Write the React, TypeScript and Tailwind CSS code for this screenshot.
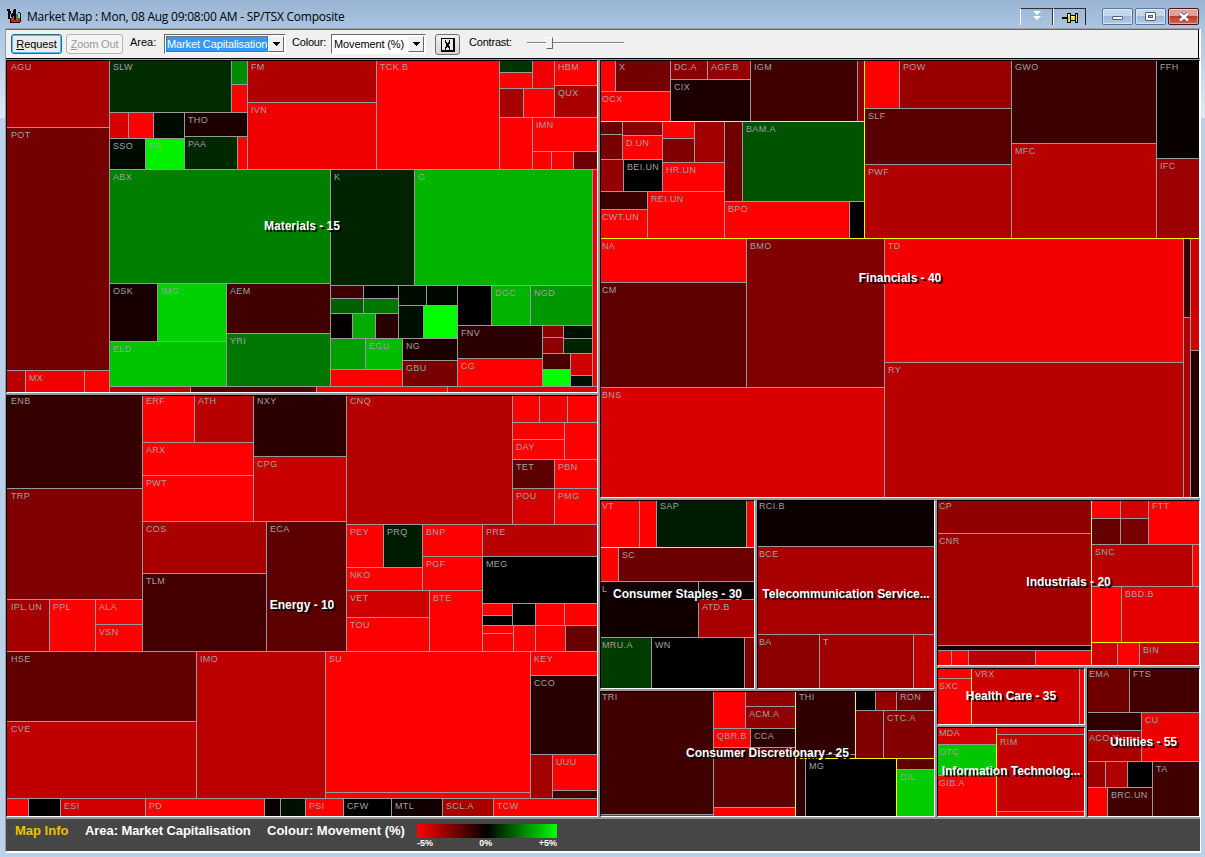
import type { CSSProperties, ReactNode } from 'react'

interface Tile {
  kind: 'tile'
  to: number
  shade: number
  label?: string
}

interface Split {
  kind: 'row' | 'col'
  to: number
  items: Cell[]
  major: boolean
}

type Cell = Tile | Split

interface Box {
  x0: number
  y0: number
  x1: number
  y1: number
}

// `to` is the coordinate of the divider that closes a cell; END fills what is left.
const END = -1

// shade: -255 (full red) .. 0 (black) .. 255 (full green)
const t = (to: number, shade: number, label?: string): Tile => ({ kind: 'tile', to, shade, label })
const row = (to: number, items: Cell[], major = false): Split => ({ kind: 'row', to, items, major })
const col = (to: number, items: Cell[], major = false): Split => ({ kind: 'col', to, items, major })

const MATERIALS = row(END, [
  col(109, [
    t(127, -168, 'AGU'),
    t(370, -116, 'POT'),
    row(END, [t(25, -184), t(84, -240, 'MX'), t(END, -255)]),
  ]),
  col(END, [
    row(169, [
      col(247, [
        row(112, [t(231, 44, 'SLW'), col(END, [t(84, 140), t(END, -255)])]),
        row(END, [
          col(184, [
            row(138, [t(128, -216), t(153, -255), t(END, 12)]),
            row(END, [t(145, 12, 'SSO'), t(END, 240, 'FR')]),
          ]),
          col(END, [t(136, -28, 'THO'), row(END, [t(237, 40, 'PAA'), t(END, -255)])]),
        ]),
      ]),
      col(376, [t(102, -176, 'FM'), t(END, -240, 'IVN')]),
      t(499, -255, 'TCK.B'),
      col(END, [
        row(117, [
          col(554, [
            row(88, [col(532, [t(72, 52), t(END, -255)]), t(END, -240)]),
            row(END, [t(523, -168), t(END, -255)]),
          ]),
          col(END, [t(85, -255, 'HBM'), t(END, -168, 'QUX')]),
        ]),
        row(END, [
          t(532, -255),
          col(END, [
            t(151, -255, 'IMN'),
            row(END, [t(551, -255), t(573, -255), t(END, -108)]),
          ]),
        ]),
      ]),
    ]),
    row(386, [
      col(330, [
        t(283, 128, 'ABX'),
        row(END, [
          col(226, [
            row(341, [t(157, -24, 'OSK'), t(END, 208, 'IMG')]),
            t(END, 196, 'ELD'),
          ]),
          col(END, [t(333, -64, 'AEM'), t(END, 120, 'YRI')]),
        ]),
      ]),
      col(592, [
        row(285, [t(414, 36, 'K'), t(END, 180, 'G')]),
        row(END, [
          col(457, [
            row(338, [
              col(398, [
                row(298, [t(363, -60), t(END, 0)]),
                row(313, [t(363, 96), t(END, 120)]),
                row(END, [t(352, -4), t(375, 172), t(END, -40)]),
              ]),
              col(END, [
                row(305, [t(426, 12), t(END, 8)]),
                row(END, [t(423, 16), t(END, 255)]),
              ]),
            ]),
            row(END, [
              col(402, [
                row(369, [t(365, 160), t(END, 188, 'EGU')]),
                t(END, -255),
              ]),
              col(END, [t(360, -28, 'NG'), t(END, -120, 'GBU')]),
            ]),
          ]),
          col(END, [
            row(325, [t(491, 0), t(530, 180, 'DGC'), t(END, 152, 'NGD')]),
            row(END, [
              col(542, [t(358, -44, 'FNV'), t(END, -255, 'CG')]),
              col(END, [
                row(353, [
                  col(563, [t(337, -140), t(END, -144)]),
                  col(END, [t(338, 16), t(END, 36)]),
                ]),
                row(END, [
                  col(570, [t(369, -72), t(END, 255)]),
                  col(END, [t(375, -208), t(END, 16)]),
                ]),
              ]),
            ]),
          ]),
        ]),
      ]),
      t(END, -240),
    ]),
    row(END, [t(190, -192), t(316, -80), t(447, -255), t(END, -224)]),
  ]),
])

const ENERGY = col(END, [
  row(651, [
    col(142, [
      t(488, -52, 'ENB'),
      t(599, -128, 'TRP'),
      row(END, [
        t(49, -164, 'IPL.UN'),
        t(95, -255, 'PPL'),
        col(END, [t(624, -255, 'ALA'), t(END, -255, 'VSN')]),
      ]),
    ]),
    col(346, [
      row(521, [
        col(253, [
          row(442, [t(194, -255, 'ERF'), t(END, -184, 'ATH')]),
          t(475, -255, 'ARX'),
          t(END, -255, 'PWT'),
        ]),
        col(END, [t(456, -44, 'NXY'), t(END, -200, 'CPG')]),
      ]),
      row(END, [
        col(266, [t(573, -168, 'COS'), t(END, -68, 'TLM')]),
        t(END, -92, 'ECA'),
      ]),
    ]),
    col(END, [
      row(524, [
        t(512, -180, 'CNQ'),
        col(END, [
          row(422, [t(539, -255), t(567, -240), t(END, -255)]),
          row(459, [col(564, [t(439, -255), t(END, -255, 'DAY')]), t(END, -255)]),
          row(488, [t(554, -92, 'TET'), t(END, -255, 'PBN')]),
          row(END, [t(554, -212, 'POU'), t(END, -255, 'PMG')]),
        ]),
      ]),
      row(END, [
        col(482, [
          row(590, [
            col(422, [
              row(567, [t(383, -255, 'PEY'), t(END, 28, 'PRQ')]),
              t(END, -255, 'NKO'),
            ]),
            col(END, [t(556, -255, 'BNP'), t(END, -255, 'PGF')]),
          ]),
          row(END, [
            col(429, [t(617, -208, 'VET'), t(END, -255, 'TOU')]),
            t(END, -255, 'BTE'),
          ]),
        ]),
        col(END, [
          t(556, -184, 'PRE'),
          t(603, 0, 'MEG'),
          row(625, [
            col(512, [t(615, -255), t(END, 0)]),
            t(535, 0),
            t(564, -255),
            t(END, -255),
          ]),
          row(END, [
            col(513, [t(633, -255), t(END, -255)]),
            t(535, -255),
            t(565, -255),
            t(END, -104),
          ]),
        ]),
      ]),
    ]),
  ]),
  row(798, [
    col(196, [t(721, -96, 'HSE'), t(END, -192, 'CVE')]),
    t(325, -188, 'IMO'),
    col(530, [t(792, -255, 'SU'), t(END, -255)]),
    col(END, [
      t(675, -255, 'KEY'),
      t(754, -40, 'CCO'),
      row(END, [
        t(552, -164),
        col(END, [t(790, -255, 'UUU'), t(END, -64)]),
      ]),
    ]),
  ]),
  row(END, [
    t(28, -255),
    t(60, 0),
    t(145, -208, 'ESI'),
    t(264, -255, 'PD'),
    t(280, -12),
    t(305, 16),
    t(343, -255, 'PSI'),
    t(391, 0, 'CFW'),
    t(442, -16, 'MTL'),
    t(493, -168, 'SCL.A'),
    t(END, -255, 'TCW'),
  ]),
])

const FINANCIALS = col(END, [
  row(238, [
    col(864, [
      row(121, [
        col(670, [
          row(91, [t(615, -255), t(END, -116, 'X')]),
          t(END, -255, 'OCX'),
        ]),
        col(750, [
          row(79, [t(707, -140, 'DC.A'), t(END, -148, 'AGF.B')]),
          t(END, -28, 'CIX'),
        ]),
        t(857, -64, 'IGM'),
        t(END, -140),
      ]),
      row(END, [
        col(724, [
          row(191, [
            col(662, [
              row(159, [
                col(622, [t(134, -104), t(END, -120)]),
                col(END, [t(135, -140), t(END, -255, 'D.UN')]),
              ]),
              row(END, [t(623, -148), t(END, 0, 'BEI.UN')]),
            ]),
            col(END, [
              row(162, [
                col(694, [t(138, -255), t(END, -128)]),
                t(END, -160),
              ]),
              t(END, -255, 'HR.UN'),
            ]),
          ]),
          row(END, [
            col(647, [t(209, -60), t(END, -255, 'CWT.UN')]),
            t(END, -255, 'REI.UN'),
          ]),
        ]),
        col(END, [
          row(201, [t(742, -112), t(END, 84, 'BAM.A')]),
          row(END, [t(849, -255, 'BPO'), t(END, 0)]),
        ]),
      ]),
    ], true),
    row(END, [
      col(1011, [
        row(108, [t(899, -255), t(END, -152, 'POW')]),
        t(164, -88, 'SLF'),
        t(END, -176, 'PWF'),
      ]),
      col(1156, [t(143, -60, 'GWO'), t(END, -184, 'MFC')]),
      col(END, [t(158, -10, 'FFH'), t(END, -156, 'IFC')]),
    ]),
  ], true),
  row(END, [
    col(884, [
      row(387, [
        col(746, [t(282, -255, 'NA'), t(END, -92, 'CM')]),
        t(END, -128, 'BMO'),
      ]),
      t(END, -216, 'BNS'),
    ]),
    col(1183, [t(362, -244, 'TD'), t(END, -184, 'RY')]),
    col(1190, [t(317, -56), t(END, -172)]),
    col(END, [t(350, -208), t(END, -40)]),
  ]),
], true)

const STAPLES = col(END, [
  row(547, [t(639, -255, 'VT'), t(656, -255), t(746, 28, 'SAP'), t(END, -255)]),
  col(END, [
    row(581, [t(618, -255), t(END, -108, 'SC')]),
    row(637, [
      t(698, -16, 'L'),
      col(END, [t(599, -12), t(END, -168, 'ATD.B')]),
    ]),
    row(END, [t(651, 60, 'MRU.A'), t(744, 0, 'WN'), t(END, -128)]),
  ]),
], true)

const TELECOM = col(END, [
  t(546, -12, 'RCI.B'),
  t(634, -168, 'BCE'),
  row(END, [t(819, -140, 'BA'), t(913, -160, 'T'), t(END, -192)]),
])

const DISCRETIONARY = row(END, [
  row(795, [
    col(713, [t(814, -64, 'TRI'), t(END, -240)]),
    col(END, [
      row(728, [
        t(745, -255),
        col(END, [t(706, -148), t(END, -144, 'ACM.A')]),
      ]),
      row(747, [t(750, -255, 'QBR.B'), t(END, -44, 'CCA')]),
      t(807, -92),
      t(END, -255),
    ]),
  ]),
  col(END, [
    row(758, [
      col(855, [t(754, -48, 'THI'), t(END, -48)]),
      col(END, [
        row(710, [t(875, 0), t(896, -148), t(END, -104, 'RON')]),
        row(END, [t(883, -128), t(END, -132, 'CTC.A')]),
      ]),
    ], true),
    row(END, [
      row(896, [t(805, -48), t(END, 0, 'MG')]),
      col(END, [t(769, -96), t(END, 204, 'GIL')]),
    ], true),
  ], true),
], true)

const INDUSTRIALS = row(END, [
  col(1091, [
    t(533, -144, 'CP'),
    t(645, -160, 'CNR'),
    t(650, -24),
    row(END, [t(951, -255), t(968, -255), t(1035, -184), t(END, -255)]),
  ]),
  col(END, [
    col(642, [
      row(544, [
        col(1148, [
          row(518, [t(1120, -255), t(END, -212)]),
          row(END, [t(1120, -100), t(END, -120)]),
        ]),
        t(END, -255, 'FTT'),
      ]),
      row(586, [t(1192, -184, 'SNC'), t(END, -255)]),
      row(END, [t(1121, -255), t(END, -228, 'BBD.B')]),
    ]),
    row(END, [t(1117, -212), t(1139, -255), t(END, -196, 'BIN')]),
  ], true),
], true)

const HEALTH = row(END, [
  col(971, [t(678, -255), t(END, -255, 'SXC')]),
  row(END, [t(1079, -204, 'VRX'), t(END, -255)]),
], true)

const TECH = row(END, [
  col(996, [t(744, -212, 'MDA'), t(775, 200, 'OTC'), t(END, -255, 'GIB.A')]),
  col(END, [t(734, -220), t(811, -196, 'RIM'), t(END, -244)]),
], true)

const UTILITIES = col(END, [
  row(712, [t(1129, -112, 'EMA'), t(END, -68, 'FTS')]),
  row(761, [
    col(1141, [t(730, -48), t(END, -172, 'ACO.X')]),
    t(END, -236, 'CU'),
  ]),
  row(END, [
    col(1152, [
      row(787, [t(1105, -156), t(1127, -176), t(END, 0)]),
      row(END, [t(1107, -255), t(END, -64, 'BRC.UN')]),
    ]),
    t(END, -64, 'TA'),
  ]),
])

function shadeColor(shade: number) {
  return shade < 0 ? `rgb(${-shade},0,0)` : `rgb(0,${shade},0)`
}

function CellView({ cell, box, panel, style }: { cell: Cell; box: Box; panel: Box; style: CSSProperties }) {
  if (cell.kind === 'tile') {
    // labels sit closer to the bevel than to an inner divider
    const left = box.x0 === panel.x0 ? (panel.x0 === 7 ? 4 : 1) : 3
    const top = box.y0 === panel.y0 ? (panel.y0 === 61 ? 1 : 0) : 2
    return (
      <div
        className="shrink-0 overflow-hidden whitespace-nowrap text-[9px] leading-[10px] tracking-[0.35px] text-[#a0a0a0]"
        style={{ ...style, backgroundColor: shadeColor(cell.shade), paddingLeft: left, paddingTop: cell.label ? top : 0 }}
      >
        {cell.label}
      </div>
    )
  }

  const horizontal = cell.kind === 'row'
  let start = horizontal ? box.x0 : box.y0
  return (
    <div
      className={`flex shrink-0 gap-px overflow-hidden ${horizontal ? 'flex-row' : 'flex-col'} ${
        cell.major ? 'bg-[#ffff00]' : 'bg-[#999999]'
      }`}
      style={style}
    >
      {cell.items.map((item, i) => {
        const from = start
        const end = item.to === END ? (horizontal ? box.x1 : box.y1) : item.to
        start = end + 1
        return (
          <CellView
            key={i}
            cell={item}
            panel={panel}
            box={horizontal ? { ...box, x0: from, x1: end } : { ...box, y0: from, y1: end }}
            style={horizontal ? { width: end - from } : { height: end - from }}
          />
        )
      })}
    </div>
  )
}

function Sector({ name, cells, box, className }: { name: string; cells: Cell; box: [number, number, number, number]; className: string }) {
  const [x0, y0, x1, y1] = box
  const panel = { x0, y0, x1, y1 }
  return (
    <section className={`relative shrink-0 border border-t-black border-r-white border-b-white border-l-black ${className}`}>
      <CellView cell={cells} box={panel} panel={panel} style={{ width: x1 - x0, height: y1 - y0 }} />
      <h2 className="pointer-events-none absolute inset-0 flex items-center justify-center whitespace-nowrap pb-[2px] text-[12px] font-bold leading-none tracking-[-0.02px] text-white [text-shadow:2px_2px_0_#000]">
        {name}
      </h2>
    </section>
  )
}

function LogoIcon() {
  return (
    <svg width="15" height="15" viewBox="0 0 15 15" shapeRendering="crispEdges">
      <path d="M4 10h9v4H4z" fill="#e01818" />
      <path d="M6 8h2V6h3v6H6z" fill="#18a030" />
      <path d="M0 1h3l2 6 2-6h2v11H7V6l-1 4H5L3 5v6H1V3H0z" fill="#000" />
      <path d="M9 4h4v10h1V5h-1M3 10h1v4h9v1H3z" fill="#000" />
    </svg>
  )
}

function PinIcon() {
  return (
    <svg width="16" height="12" viewBox="0 0 16 12" shapeRendering="crispEdges">
      <path d="M0 5h6v2H0zM5 1h4v2h4V1h3v10h-3V9H9v2H5z" fill="#000" />
      <path d="M6 2h2v8H6zM9 4h4v4H9zM14 2h1v8h-1z" fill="#e8e000" />
      <path d="M9 4h3v1H9zM6 2h1v3H6z" fill="#ffffb0" />
    </svg>
  )
}

function WindowButton({ close, children }: { close?: boolean; children: ReactNode }) {
  return (
    <button
      className={`flex h-[17px] w-[31px] items-center justify-center rounded-[2px] border shadow-[inset_0_0_0_1px_rgba(255,255,255,0.45)] ${
        close
          ? 'border-[#4a1420] bg-linear-to-b from-[#e5a095] from-45% via-[#bf3a28] via-50% to-[#d0644c]'
          : 'border-[#5b7899] bg-linear-to-b from-[#c2d6ec] from-45% via-[#9cb9d8] via-50% to-[#b4cde8]'
      }`}
    >
      {children}
    </button>
  )
}

function TitleBar() {
  return (
    <header className="flex h-[28px] shrink-0 bg-linear-to-b from-[#98b4d2] to-[#abc5e2] pl-[7px] pr-[6px]">
      <div className="mt-[8px]">
        <LogoIcon />
      </div>
      <h1 className="ml-[5px] mt-[8px] whitespace-nowrap font-['Open_Sans','Noto_Sans',sans-serif] text-[12px] leading-[17px] tracking-[-0.24px] text-black">
        Market Map : Mon, 08 Aug 09:08:00 AM - SP/TSX Composite
      </h1>
      <div className="ml-auto mt-[8px] flex h-[17px]">
        <div className="flex w-[33px] justify-center border-l border-r border-t border-l-white border-r-[#303030] border-t-[#303030] pt-[2px]">
          <svg width="8" height="10" viewBox="0 0 8 10">
            <path d="M0 0h8L4 4zM0 5h8L4 9z" fill="#fff" />
          </svg>
        </div>
        <div className="flex w-[33px] justify-center border-l border-r border-t border-l-white border-r-[#202020] border-t-[#303030] pt-[3px]">
          <PinIcon />
        </div>
        <div className="ml-[16px] flex gap-[2px]">
          <WindowButton>
            <span className="mt-[3px] h-[4px] w-[11px] rounded-[1px] border border-[#50607a] bg-white" />
          </WindowButton>
          <WindowButton>
            <span className="flex h-[9px] w-[11px] items-center justify-center rounded-[1px] border border-[#50607a] bg-white">
              <span className="h-[3px] w-[5px] border border-[#50607a] bg-[#9cb9d8]" />
            </span>
          </WindowButton>
          <WindowButton close>
            <svg width="12" height="10" viewBox="0 0 12 10">
              <path d="M2 1.500l8 7M10 1.500l-8 7" stroke="#50505e" strokeWidth="4" />
              <path d="M2 1.500l8 7M10 1.500l-8 7" stroke="#fff" strokeWidth="2.400" />
            </svg>
          </WindowButton>
        </div>
      </div>
    </header>
  )
}

function Select({ value, selected, className }: { value: string; selected?: boolean; className: string }) {
  return (
    <div className={`flex h-[20px] border border-b-white border-l-[#696969] border-r-white border-t-[#696969] bg-white p-px ${className}`}>
      <span
        className={`flex flex-1 items-center whitespace-nowrap pl-[1px] text-[11px] leading-none tracking-[-0.12px] ${
          selected ? 'bg-[#3399ff] text-white outline-1 -outline-offset-1 outline-dotted outline-[#a05000]' : 'text-black'
        }`}
      >
        {value}
      </span>
      <span className="flex w-[16px] items-center justify-center border border-b-[#696969] border-l-[#f8f8f8] border-r-[#696969] border-t-[#f8f8f8] bg-[#f0f0f0]">
        <svg width="7" height="4" viewBox="0 0 7 4" shapeRendering="crispEdges">
          <path d="M0 0h7L3.500 4z" fill="#000" />
        </svg>
      </span>
    </div>
  )
}

function Toolbar() {
  return (
    <div className="mb-px flex h-[30px] shrink-0 border-b border-r border-t border-b-black border-r-white border-t-[#696969] bg-[#f0f0f0] pl-[5px] pt-[4px] text-[11px] leading-none text-black shadow-[inset_-1px_0_0_#000]">
      <button className="h-[20px] w-[51px] rounded-[3px] border border-[#2c628b] bg-[#ececec] text-[11px] leading-none tracking-[-0.1px] shadow-[inset_0_0_0_1px_#48c8f0]">
        <u>R</u>equest
      </button>
      <button className="ml-[4px] h-[20px] w-[57px] whitespace-nowrap rounded-[3px] border border-[#b4b4b4] bg-[#f4f4f4] text-[11px] leading-none tracking-[-0.15px] text-[#9a9a9a]">
        <u>Z</u>oom Out
      </button>
      <span className="ml-[7px] mt-[3px] w-[34px]">Area:</span>
      <Select value="Market Capitalisation" selected className="w-[122px]" />
      <span className="ml-[6px] mt-[3px] w-[39px] tracking-[-0.2px]">Colour:</span>
      <Select value="Movement (%)" className="w-[95px]" />
      <button className="ml-[9px] flex h-[21px] w-[25px] items-center justify-center rounded-[3px] border border-[#707070] bg-linear-to-b from-[#f2f2f2] to-[#d4d4d4]">
        <svg width="14" height="14" viewBox="0 0 14 14" shapeRendering="crispEdges">
          <path d="M0 0h14v14H0z" fill="#000" />
          <path d="M1 1h11v11H1z" fill="#e8e8e8" />
          <path d="M4 2h1v2h1v1h1V4h1V2h1v3L8 6v2l1 1v3H8v-2H7V9H6v1H5v2H4V9l1-1V6L4 5z" fill="#000" />
        </svg>
      </button>
      <span className="ml-[9px] mt-[3px] w-[58px] tracking-[-0.2px]">Contrast:</span>
      <div className="relative mt-[8px] h-[2px] w-[97px] border-t border-t-[#808080] bg-white">
        <span className="absolute -top-[6px] left-[19px] h-[12px] w-[7px] border border-b-[#696969] border-l-white border-r-[#696969] border-t-white bg-[#f0f0f0]" />
      </div>
    </div>
  )
}

function Legend() {
  return (
    <footer className="flex h-[32px] shrink-0 bg-[#464646] pl-[9px] text-[13px] font-bold leading-none text-white">
      <span className="mt-[5px] w-[70px] whitespace-nowrap text-[#f0c000]">Map Info</span>
      <span className="mt-[5px] w-[182px] whitespace-nowrap tracking-[-0.07px]">Area: Market Capitalisation</span>
      <span className="mt-[5px] w-[150px] whitespace-nowrap">Colour: Movement (%)</span>
      <div className="mt-[5px] w-[140px]">
        <div className="h-[14px] bg-linear-to-r/srgb from-[#ff0000] via-black to-[#00ff00]" />
        <div className="mt-[1px] flex justify-between text-[9px] leading-[9px]">
          <span>-5%</span>
          <span>0%</span>
          <span>+5%</span>
        </div>
      </div>
    </footer>
  )
}

export default function App() {
  return (
    <div className="flex h-[857px] w-[1205px] flex-col overflow-hidden bg-[#b9d1ea] font-['Liberation_Sans',Arial,sans-serif]">
      <TitleBar />
      <div className="flex flex-1 bg-linear-to-b from-[#abc5e2] to-[#dfeaf6] bg-[length:100%_90px] bg-no-repeat pl-[5px]">
        <main className="flex h-[825px] w-[1196px] flex-col border-b-2 border-l border-r border-t border-b-white border-l-[#999999] border-r-white border-t-[#a0a0a0] bg-[#999999]">
          <Toolbar />
          {/* sectors */}
          <div className="mb-[2px] flex shrink-0 gap-[2px] bg-[#999999]">
            <div className="flex flex-col gap-[2px]">
              <Sector name="Materials - 15" cells={MATERIALS} box={[7, 61, 597, 392]} className="h-[333px] w-[592px]" />
              <Sector name="Energy - 10" cells={ENERGY} box={[7, 396, 597, 816]} className="h-[422px] w-[592px]" />
            </div>
            <div className="flex flex-col gap-[2px]">
              <Sector name="Financials - 40" cells={FINANCIALS} box={[601, 61, 1199, 497]} className="h-[438px] w-[600px]" />
              <div className="flex gap-[2px]">
                <div className="flex flex-col gap-[2px]">
                  <div className="flex gap-[2px]">
                    <Sector name="Consumer Staples - 30" cells={STAPLES} box={[601, 501, 754, 688]} className="h-[189px] w-[155px]" />
                    <Sector name="Telecommunication Service..." cells={TELECOM} box={[758, 501, 934, 688]} className="h-[189px] w-[178px]" />
                  </div>
                  <Sector name="Consumer Discretionary - 25" cells={DISCRETIONARY} box={[601, 692, 934, 816]} className="h-[126px] w-[335px]" />
                </div>
                <div className="flex flex-col gap-[2px]">
                  <Sector name="Industrials - 20" cells={INDUSTRIALS} box={[938, 501, 1199, 665]} className="h-[166px] w-[263px]" />
                  <div className="flex gap-[2px]">
                    <div className="flex flex-col gap-[2px]">
                      <Sector name="Health Care - 35" cells={HEALTH} box={[938, 669, 1084, 724]} className="h-[57px] w-[148px]" />
                      <Sector name="Information Technolog..." cells={TECH} box={[938, 728, 1084, 816]} className="h-[90px] w-[148px]" />
                    </div>
                    <Sector name="Utilities - 55" cells={UTILITIES} box={[1088, 669, 1199, 816]} className="h-[149px] w-[113px]" />
                  </div>
                </div>
              </div>
            </div>
          </div>
          <Legend />
        </main>
      </div>
    </div>
  )
}
